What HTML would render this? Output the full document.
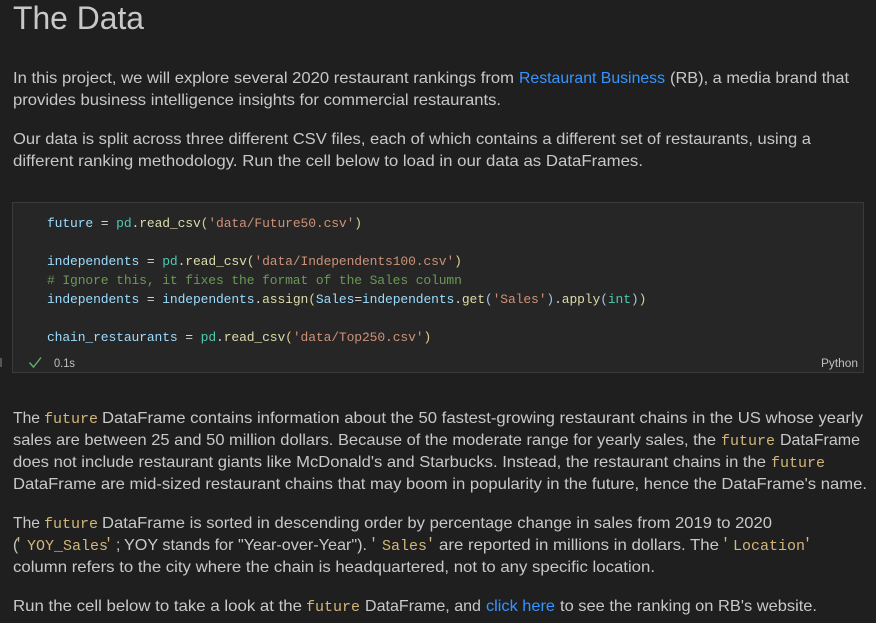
<!DOCTYPE html>
<html>
<head>
<meta charset="utf-8">
<style>
html,body{margin:0;padding:0;background:#1f1f1f;width:876px;height:623px;overflow:hidden}
svg{display:block}
.t{font-family:"Liberation Sans",sans-serif;font-size:15.6px;fill:#c8c8c8}
.l{fill:#3794ff}
.m{font-family:"Liberation Mono",monospace;font-size:15px;fill:#d2b67a}
.c{font-family:"Liberation Mono",monospace;font-size:13px;letter-spacing:-.12px;fill:#d4d4d4;white-space:pre}
.v{fill:#9cdcfe}.n{fill:#4ec9b0}.f{fill:#dcdcaa}.s{fill:#ce9178}.g{fill:#6a9955}.y{fill:#dcd08a}.b{fill:#9cc8e8}
</style>
</head>
<body>
<svg width="876" height="623" viewBox="0 0 876 623" xmlns="http://www.w3.org/2000/svg">
<rect width="876" height="623" fill="#1f1f1f"/>
<text x="13" y="29" textLength="131" lengthAdjust="spacingAndGlyphs" style="font-family:'Liberation Sans',sans-serif;font-size:32px;fill:#c8c8c8">The Data</text>

<text class="t" x="13" y="83" textLength="501" lengthAdjust="spacingAndGlyphs">In this project, we will explore several 2020 restaurant rankings from</text>
<text class="t l" x="519" y="83" textLength="146" lengthAdjust="spacingAndGlyphs">Restaurant Business</text>
<text class="t" x="670" y="83" textLength="179" lengthAdjust="spacingAndGlyphs">(RB), a media brand that</text>
<text class="t" x="13" y="105" textLength="488" lengthAdjust="spacingAndGlyphs">provides business intelligence insights for commercial restaurants.</text>
<text class="t" x="13" y="144" textLength="798" lengthAdjust="spacingAndGlyphs">Our data is split across three different CSV files, each of which contains a different set of restaurants, using a</text>
<text class="t" x="13" y="166" textLength="630" lengthAdjust="spacingAndGlyphs">different ranking methodology. Run the cell below to load in our data as DataFrames.</text>

<rect x="12.5" y="202.5" width="851" height="170" fill="#262626" stroke="#3a3a3a" stroke-width="1"/>
<text class="c" x="47" y="227" xml:space="preserve"><tspan class="v">future</tspan> = <tspan class="n">pd</tspan>.<tspan class="f">read_csv</tspan><tspan class="y">(</tspan><tspan class="s">'data/Future50.csv'</tspan><tspan class="y">)</tspan></text>
<text class="c" x="47" y="265" xml:space="preserve"><tspan class="v">independents</tspan> = <tspan class="n">pd</tspan>.<tspan class="f">read_csv</tspan><tspan class="y">(</tspan><tspan class="s">'data/Independents100.csv'</tspan><tspan class="y">)</tspan></text>
<text class="c g" x="47" y="284" xml:space="preserve"># Ignore this, it fixes the format of the Sales column</text>
<text class="c" x="47" y="303" xml:space="preserve"><tspan class="v">independents</tspan> = <tspan class="v">independents</tspan>.<tspan class="f">assign</tspan><tspan class="y">(</tspan><tspan class="v">Sales</tspan>=<tspan class="v">independents</tspan>.<tspan class="f">get</tspan><tspan class="b">(</tspan><tspan class="s">'Sales'</tspan><tspan class="b">)</tspan>.<tspan class="f">apply</tspan><tspan class="b">(</tspan><tspan class="n">int</tspan><tspan class="b">)</tspan><tspan class="y">)</tspan></text>
<text class="c" x="47" y="341" xml:space="preserve"><tspan class="v">chain_restaurants</tspan> = <tspan class="n">pd</tspan>.<tspan class="f">read_csv</tspan><tspan class="y">(</tspan><tspan class="s">'data/Top250.csv'</tspan><tspan class="y">)</tspan></text>

<rect x="0" y="358" width="2" height="9" fill="#555"/>
<path d="M29.5 362.5 L33.5 367 L41 357.5" fill="none" stroke="#62b06a" stroke-width="1.4"/>
<text x="54" y="367" textLength="21" lengthAdjust="spacingAndGlyphs" style="font-family:'Liberation Sans',sans-serif;font-size:11.5px;fill:#c0c0c0">0.1s</text>
<text x="821" y="367" textLength="37" lengthAdjust="spacingAndGlyphs" style="font-family:'Liberation Sans',sans-serif;font-size:11.5px;fill:#c0c0c0">Python</text>

<text class="t" x="13" y="423" textLength="27" lengthAdjust="spacingAndGlyphs">The</text>
<text class="m" x="44" y="423">future</text>
<text class="t" x="102" y="423" textLength="761" lengthAdjust="spacingAndGlyphs">DataFrame contains information about the 50 fastest-growing restaurant chains in the US whose yearly</text>

<text class="t" x="13" y="445" textLength="703" lengthAdjust="spacingAndGlyphs">sales are between 25 and 50 million dollars. Because of the moderate range for yearly sales, the</text>
<text class="m" x="721" y="445">future</text>
<text class="t" x="780" y="445" textLength="80" lengthAdjust="spacingAndGlyphs">DataFrame</text>

<text class="t" x="13" y="467" textLength="753" lengthAdjust="spacingAndGlyphs">does not include restaurant giants like McDonald's and Starbucks. Instead, the restaurant chains in the</text>
<text class="m" x="771" y="467">future</text>

<text class="t" x="13" y="489" textLength="854" lengthAdjust="spacingAndGlyphs">DataFrame are mid-sized restaurant chains that may boom in popularity in the future, hence the DataFrame's name.</text>

<text class="t" x="13" y="528" textLength="27" lengthAdjust="spacingAndGlyphs">The</text>
<text class="m" x="44" y="528">future</text>
<text class="t" x="102" y="528" textLength="670" lengthAdjust="spacingAndGlyphs">DataFrame is sorted in descending order by percentage change in sales from 2019 to 2020</text>

<text class="t" x="13" y="550">(</text>
<text class="m" x="14" y="548">'</text>
<text class="m" x="27" y="550">YOY_Sales</text>
<text class="m" x="104" y="548">'</text>
<text class="t" x="116" y="550">;</text>
<text class="t" x="124" y="550" textLength="243" lengthAdjust="spacingAndGlyphs">YOY stands for "Year-over-Year").</text>
<text class="m" x="369" y="548">'</text>
<text class="m" x="382" y="550">Sales</text>
<text class="m" x="426" y="548">'</text>
<text class="t" x="439" y="550" textLength="280" lengthAdjust="spacingAndGlyphs">are reported in millions in dollars. The</text>
<text class="m" x="721" y="548">'</text>
<text class="m" x="733" y="550">Location</text>
<text class="m" x="803" y="548">'</text>

<text class="t" x="13" y="572" textLength="642" lengthAdjust="spacingAndGlyphs">column refers to the city where the chain is headquartered, not to any specific location.</text>

<text class="t" x="13" y="611" textLength="289" lengthAdjust="spacingAndGlyphs">Run the cell below to take a look at the</text>
<text class="m" x="306" y="611">future</text>
<text class="t" x="365" y="611" textLength="116" lengthAdjust="spacingAndGlyphs">DataFrame, and</text>
<text class="t l" x="486" y="611" textLength="69" lengthAdjust="spacingAndGlyphs">click here</text>
<text class="t" x="560" y="611" textLength="257" lengthAdjust="spacingAndGlyphs">to see the ranking on RB's website.</text>
</svg>
</body>
</html>
